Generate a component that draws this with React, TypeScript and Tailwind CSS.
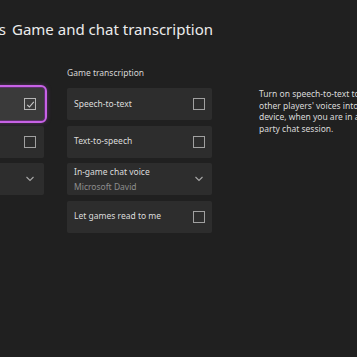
import React from "react";

function Check({ checked, light }: { checked?: boolean; light?: boolean }) {
  return (
    <div
      className={`w-[12px] h-[12px] border-[1.5px] ${light ? "border-[#b5b5b5]" : "border-[#a0a0a0]"} flex items-center justify-center shrink-0`}
    >
      {checked && (
        <svg width="9" height="9" viewBox="0 0 9 9" fill="none">
          <path d="M1.2 4.8 L3.4 7 L7.8 1.8" stroke="#c8c8c8" strokeWidth="1.1" />
        </svg>
      )}
    </div>
  );
}

function Chevron() {
  return (
    <svg width="10" height="6" viewBox="0 0 10 6" fill="none" className="shrink-0">
      <path d="M1.5 1 L5 4.5 L8.5 1" stroke="#a8a8a8" strokeWidth="1.1" />
    </svg>
  );
}

export default function App() {
  return (
    <div className="w-[357px] h-[357px] bg-[#202020] overflow-hidden font-['Noto_Sans',sans-serif]">
      <div className="pt-[19px] flex text-[15px] leading-[20px] text-[#ececec]">
        <span className="w-[6px] flex justify-end overflow-hidden whitespace-nowrap">Settings</span>
        <span className="ml-[6px] whitespace-nowrap">Game and chat transcription</span>
      </div>

      <div className="mt-[28px] flex items-start">
        {/* left column */}
        <div className="ml-[-96px] w-[140px] pt-[21px] flex flex-col gap-[5.5px] shrink-0">
          <div className="h-[32px] rounded-[3px] bg-[#3a3a3a] outline-2 outline-[#c762e6] outline-offset-[1px] shadow-[0_0_5px_2px_rgba(190,80,225,0.55)] flex items-center justify-end pr-[8px]">
            <Check checked light />
          </div>
          <div className="h-[32px] rounded-[2px] bg-[#2d2d2d] flex items-center justify-end pr-[8px]">
            <Check />
          </div>
          <div className="h-[32px] rounded-[2px] bg-[#2d2d2d] flex items-center justify-end pr-[9px]">
            <Chevron />
          </div>
        </div>

        {/* middle column */}
        <div className="ml-[23px] w-[145px] shrink-0 flex flex-col">
          <div className="h-[12px] leading-[12px] text-[8.5px] text-[#d6d6d6] whitespace-nowrap">Game transcription</div>
          <div className="mt-[9px] flex flex-col gap-[5.5px]">
            <div className="h-[32px] rounded-[2px] bg-[#2d2d2d] flex items-center justify-between pl-[7px] pr-[7px]">
              <span className="text-[8.5px] text-[#dcdcdc] whitespace-nowrap">Speech-to-text</span>
              <Check />
            </div>
            <div className="h-[32px] rounded-[2px] bg-[#2d2d2d] flex items-center justify-between pl-[7px] pr-[7px]">
              <span className="text-[8.5px] text-[#dcdcdc] whitespace-nowrap">Text-to-speech</span>
              <Check />
            </div>
            <div className="h-[32px] rounded-[2px] bg-[#2d2d2d] flex items-center justify-between pl-[7px] pr-[8px]">
              <div className="flex flex-col text-[8.5px] leading-[15px] whitespace-nowrap">
                <span className="text-[#dcdcdc]">In-game chat voice</span>
                <span className="text-[#8e8e8e]">Microsoft David</span>
              </div>
              <Chevron />
            </div>
            <div className="h-[32px] rounded-[2px] bg-[#2d2d2d] flex items-center justify-between pl-[7px] pr-[7px]">
              <span className="text-[8.5px] text-[#dcdcdc] whitespace-nowrap">Let games read to me</span>
              <Check />
            </div>
          </div>
        </div>

        {/* right column */}
        <div className="ml-[47px] pt-[21px] text-[8.5px] leading-[11.5px] text-[#dadada] whitespace-nowrap">
          <div>Turn on speech-to-text to convert</div>
          <div>other players' voices into text on your</div>
          <div>device, when you are in a game or</div>
          <div>party chat session.</div>
        </div>
      </div>
    </div>
  );
}
